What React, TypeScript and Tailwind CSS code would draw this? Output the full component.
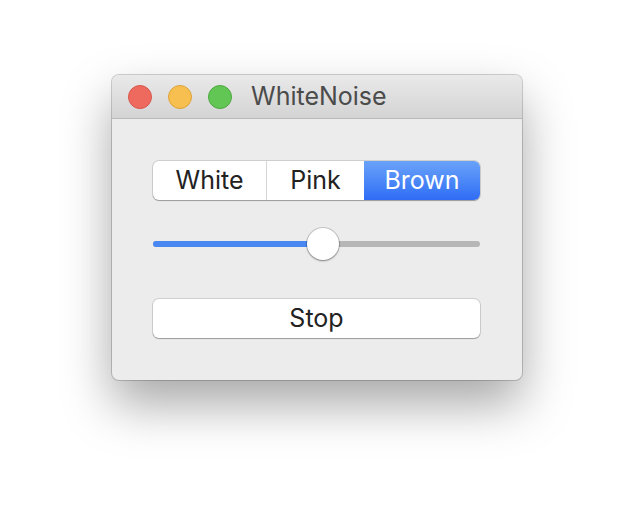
import React from "react";

const font = { fontFamily: "Inter, 'Liberation Sans', sans-serif" };

const App = () => {
  const value = 52;
  return (
    <div className="w-[634px] h-[528px] bg-white pt-[75px] pl-[112px]" style={font}>
      {/* Window */}
      <div className="w-[410px] h-[305px] rounded-[7px] bg-[#ececec] overflow-hidden shadow-[0_0_0_1px_rgba(0,0,0,0.18),0_24px_50px_rgba(0,0,0,0.35)] flex flex-col">
        {/* Title bar */}
        <div className="h-[44px] shrink-0 flex items-center bg-gradient-to-b from-[#e9e9e9] to-[#d4d4d4] border-b border-[#b9b9b9] pl-[16px]">
          <div className="flex gap-[16px]">
            <span className="w-[24px] h-[24px] rounded-full bg-[#ee6a5f] border border-[#d9574c]" />
            <span className="w-[24px] h-[24px] rounded-full bg-[#f6bf4f] border border-[#dea33a]" />
            <span className="w-[24px] h-[24px] rounded-full bg-[#62c654] border border-[#4ea83f]" />
          </div>
          <span className="ml-[19px] text-[25px] text-[#4b4b4b] leading-none">WhiteNoise</span>
        </div>

        {/* Body */}
        <div className="flex flex-col pl-[41px] pr-[42px] pt-[42px]">
          {/* Segmented control */}
          <div className="h-[39px] flex rounded-[6px] bg-white overflow-hidden shadow-[0_0_0_1px_rgba(0,0,0,0.12),0_1px_1px_rgba(0,0,0,0.25)] text-[25px] text-[#222]">
            <div className="w-[114px] flex items-center justify-center border-r border-[#d6d6d6]">White</div>
            <div className="w-[97px] flex items-center justify-center">Pink</div>
            <div className="flex-1 flex items-center justify-center text-white bg-gradient-to-b from-[#6aa2f9] to-[#2f6cf5]">
              Brown
            </div>
          </div>

          {/* Slider */}
          <div className="relative h-[32px] mt-[28px] flex items-center">
            <div className="w-full h-[6px] rounded-full bg-[#b6b6b6] overflow-hidden">
              <div className="h-full bg-[#4a88f1]" style={{ width: `${value}%` }} />
            </div>
            <div
              className="absolute top-0 w-[32px] h-[32px] -ml-[16px] rounded-full bg-white shadow-[0_0_0_1px_rgba(0,0,0,0.15),0_1px_2px_rgba(0,0,0,0.35)]"
              style={{ left: `${value}%` }}
            />
          </div>

          {/* Stop button */}
          <button className="mt-[39px] h-[39px] rounded-[6px] bg-white text-[25px] text-[#222] shadow-[0_0_0_1px_rgba(0,0,0,0.12),0_1px_1px_rgba(0,0,0,0.25)]">
            Stop
          </button>
        </div>
      </div>
    </div>
  );
};

export default App;
